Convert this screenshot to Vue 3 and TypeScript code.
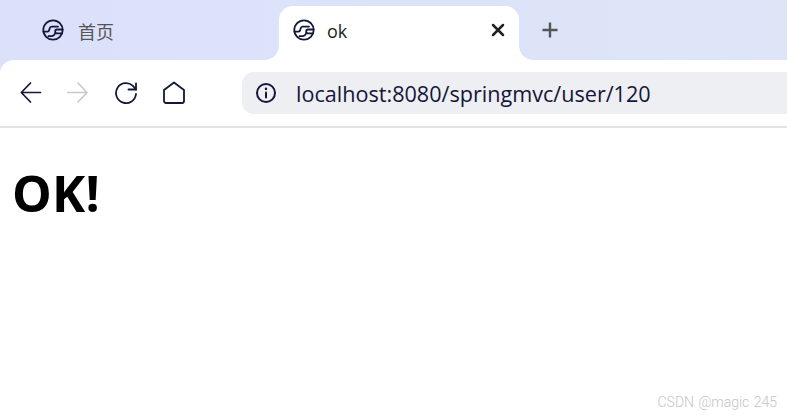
<script setup lang="ts">
const url: string = 'localhost:8080/springmvc/user/120'
</script>

<template>
  <div class="page">
    <header class="chrome">
      <div class="tabs">
        <div class="tab">
          <svg class="globe" width="24" height="24" viewBox="0 0 24 24" fill="none" stroke="#14163a" stroke-width="1.8" stroke-linecap="round" stroke-linejoin="round">
            <circle cx="12" cy="12" r="9.7" />
            <path d="M2.500 13.700H6.500c1 0 1.500-.7 1.700-1.700l.4-1.500c.3-1 1-1.900 2-1.900H17" />
            <path d="M21.500 11.500H16c-1.200 0-1.800.8-1.800 1.900s.6 1.900 1.800 1.900h4.800" />
            <path d="M14.300 15c-.6 1.700-1.600 2.900-3.300 3.200H7.500" />
          </svg>
          <span class="tab-title muted">首页</span>
        </div>
        <div class="tab active">
          <svg class="globe" width="24" height="24" viewBox="0 0 24 24" fill="none" stroke="#14163a" stroke-width="1.8" stroke-linecap="round" stroke-linejoin="round">
            <circle cx="12" cy="12" r="9.7" />
            <path d="M2.500 13.700H6.500c1 0 1.500-.7 1.700-1.700l.4-1.500c.3-1 1-1.900 2-1.900H17" />
            <path d="M21.500 11.500H16c-1.200 0-1.800.8-1.800 1.900s.6 1.900 1.800 1.900h4.800" />
            <path d="M14.300 15c-.6 1.700-1.600 2.900-3.300 3.200H7.500" />
          </svg>
          <span class="tab-title">ok</span>
          <svg class="close" width="14" height="14" viewBox="0 0 14 14" fill="none" stroke="#222" stroke-width="2.500" stroke-linecap="round">
            <path d="M2 2l10 10M12 2L2 12" />
          </svg>
        </div>
        <svg class="plus" width="16" height="16" viewBox="0 0 16 16" fill="none" stroke="#555" stroke-width="2.400">
          <path d="M8 .5v15M.5 8h15" />
        </svg>
      </div>
      <div class="toolbar">
        <div class="nav">
          <svg width="24" height="24" viewBox="0 0 24 24" fill="none" stroke="#14163a" stroke-width="1.700" stroke-linecap="round" stroke-linejoin="round">
            <path d="M22.500 11.500H3.500M12.500 2L3.300 11.500l9.200 9.500" />
          </svg>
          <svg width="24" height="24" viewBox="0 0 24 24" fill="none" stroke="#c8c9d2" stroke-width="1.700" stroke-linecap="round" stroke-linejoin="round">
            <path d="M1.800 11.500H20.500M12 2l9 9.500-9 9.500" />
          </svg>
          <svg width="24" height="24" viewBox="0 0 24 24" fill="none" stroke="#14163a" stroke-width="1.800" stroke-linecap="round" stroke-linejoin="round">
            <path d="M22 13A10 10 0 1 1 18.700 4.600L22 8.500" />
            <path d="M22 2.300V8.500h-7.500" />
          </svg>
          <svg width="24" height="24" viewBox="0 0 24 24" fill="none" stroke="#14163a" stroke-width="1.800" stroke-linecap="round" stroke-linejoin="round">
            <path d="M12 1.500L22 9v11a2 2 0 0 1-2 2H4a2 2 0 0 1-2-2V9z" />
          </svg>
        </div>
        <div class="address">
          <svg width="22" height="22" viewBox="0 0 22 22" fill="none" stroke="#14163a" stroke-width="2" stroke-linecap="round">
            <circle cx="11" cy="11" r="9" />
            <path d="M11 10.500v5" />
            <path d="M11 6.800v.1" stroke-width="2.400" />
          </svg>
          <span class="url">{{ url }}</span>
        </div>
      </div>
    </header>
    <main class="content">
      <h1>OK!</h1>
    </main>
    <div class="watermark">CSDN @magic 245</div>
  </div>
</template>

<style>
html, body { margin: 0; background: #fff; }
</style>

<style scoped>
.page {
  width: 787px;
  height: 415px;
  overflow: hidden;
  position: relative;
  background: #fff;
  font-family: "Open Sans", "Noto Sans CJK SC", sans-serif;
}
.chrome {
  background: linear-gradient(90deg, #dce1fb, #dde5f7);
  border-bottom: 2px solid #e3e3e6;
}
.tabs {
  height: 60px;
  display: flex;
  align-items: flex-end;
}
.tab {
  height: 54px;
  width: 240px;
  box-sizing: border-box;
  display: flex;
  align-items: center;
  padding: 0 14px 6px 13px;
  position: relative;
}
.tab:first-child {
  width: 279px;
  padding-left: 41px;
}
.tab-title {
  font-size: 18px;
  margin-left: 11px;
  color: #1c1c1c;
  flex: 1;
  position: relative;
  top: 1px;
}
.tab-title.muted {
  color: #555;
  font-family: "Noto Sans CJK SC", sans-serif;
  font-size: 18px;
  margin-left: 13px;
}
.active {
  background: #fff;
  border-radius: 14px 14px 0 0;
}
.active::before,
.active::after {
  content: "";
  position: absolute;
  bottom: 0;
  width: 14px;
  height: 14px;
}
.active::before {
  left: -14px;
  background: radial-gradient(circle at 0 0, transparent 13.500px, #fff 14px);
}
.active::after {
  right: -14px;
  background: radial-gradient(circle at 100% 0, transparent 13.500px, #fff 14px);
}
.plus {
  margin: 0 0 22px 23px;
}
.toolbar {
  height: 66px;
  background: #fff;
  border-top-left-radius: 14px;
  display: flex;
  align-items: center;
  padding-left: 18px;
}
.nav {
  display: flex;
  gap: 24px;
  align-items: center;
}
.address {
  margin-left: 56px;
  flex: 1;
  height: 42px;
  background: #eeeff2;
  border-radius: 12px 0 0 12px;
  display: flex;
  align-items: center;
  padding-left: 13px;
}
.url {
  margin-left: 19px;
  font-size: 21.600px;
  color: #14163a;
}
.content {
  padding: 0 12px;
}
h1 {
  margin: 31px 0 0;
  font-size: 50px;
  line-height: 68px;
  letter-spacing: 0.300px;
  font-weight: 700;
  color: #000;
}
.watermark {
  position: absolute;
  right: 10px;
  bottom: 5px;
  font-family: Roboto, sans-serif;
  font-weight: 300;
  font-size: 14px;
  word-spacing: 1px;
  color: #c4c4c4;
}
</style>
